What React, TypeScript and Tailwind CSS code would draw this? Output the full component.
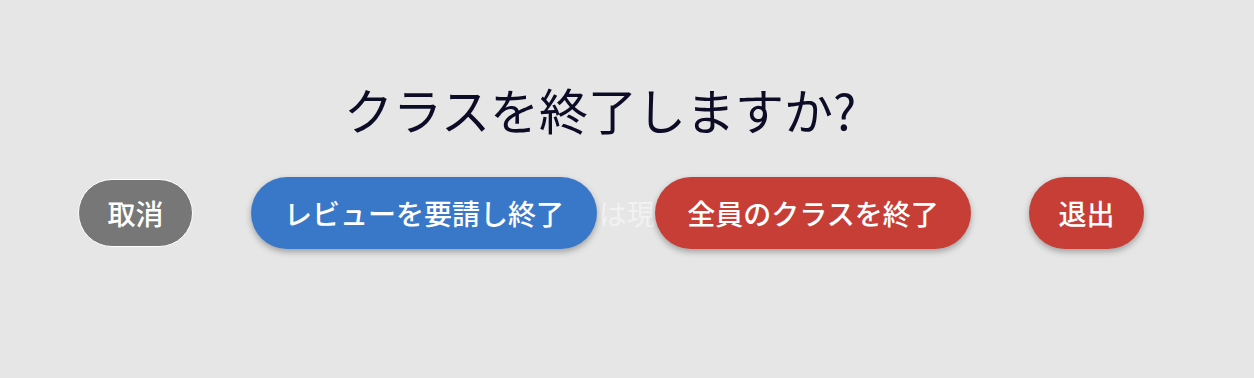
import React from "react";

export default function App() {
  return (
    <div
      className="h-[378px] w-full bg-[#e6e6e6] flex flex-col overflow-hidden"
      style={{ fontFamily: '"Noto Sans CJK JP", "Noto Sans", sans-serif' }}
    >
      <h1 className="mt-[81px] pr-[54px] text-center text-[49px] leading-[56px] font-normal text-[#0c0c26]">
        クラスを終了しますか?
      </h1>
      <div className="mt-[40px] grid">
        <p className="col-start-1 row-start-1 self-center text-center text-[28px] leading-[36px] text-[#f2f2f2]">
          このクラスは現在も進行中
        </p>
        <div className="col-start-1 row-start-1 flex items-center gap-[58px] pl-[78px]">
          <button className="h-[68px] w-[115px] rounded-full border border-white bg-[#777777] text-[28px] leading-[34px] font-medium text-white">
            取消
          </button>
          <button className="h-[72px] w-[346px] rounded-full bg-[#3977c9] text-[28px] leading-[34px] font-medium text-white shadow-[0_3px_6px_rgba(0,0,0,0.3)]">
            レビューを要請し終了
          </button>
          <button className="h-[72px] w-[316px] rounded-full bg-[#c73e37] text-[28px] leading-[34px] font-medium text-white shadow-[0_3px_6px_rgba(0,0,0,0.3)]">
            全員のクラスを終了
          </button>
          <button className="h-[72px] w-[115px] rounded-full bg-[#c73e37] text-[28px] leading-[34px] font-medium text-white shadow-[0_3px_6px_rgba(0,0,0,0.3)]">
            退出
          </button>
        </div>
      </div>
    </div>
  );
}
